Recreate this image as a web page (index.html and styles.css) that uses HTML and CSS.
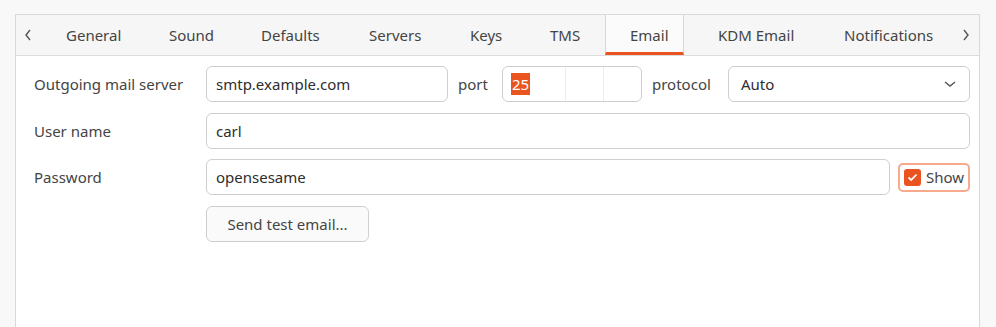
FILE: index.html
```html
<!DOCTYPE html>
<html lang="en">
<head>
  <meta charset="UTF-8" />
  <title>Preferences - Email</title>
  <link rel="stylesheet" href="styles.css">
</head>
<body>
  <div class="notebook">
    <div class="tabbar">
      <span class="arrow left">
        <svg width="10" height="14" viewBox="0 0 10 14"><path d="M7 2 L3 7 L7 12" fill="none" stroke="#555" stroke-width="1.4"/></svg>
      </span>
      <div class="tabs">
        <span class="tab" style="width: 103px">General</span>
        <span class="tab" style="width: 92px">Sound</span>
        <span class="tab" style="width: 108px">Defaults</span>
        <span class="tab" style="width: 101px">Servers</span>
        <span class="tab" style="width: 80px">Keys</span>
        <span class="tab" style="width: 78px">TMS</span>
        <span class="tab active" style="width: 79px">Email</span>
        <span class="tab wide" style="width: 137px">KDM Email</span>
        <span class="tab" style="width: 132px">Notifications</span>
      </div>
      <span class="arrow">
        <svg width="10" height="14" viewBox="0 0 10 14"><path d="M3 2 L7 7 L3 12" fill="none" stroke="#555" stroke-width="1.4"/></svg>
      </span>
    </div>

    <div class="form">
      <label class="label">Outgoing mail server</label>
      <div class="line">
        <div class="entry server">smtp.example.com</div>
        <span class="label port">port</span>
        <div class="spin">
          <span class="spin-value"><span class="selected">25</span></span>
          <span class="spin-btn"></span>
          <span class="spin-btn"></span>
        </div>
        <span class="label protocol">protocol</span>
        <div class="entry combo">
          <span>Auto</span>
          <svg width="14" height="10" viewBox="0 0 14 10"><path d="M2 3 L7 7 L12 3" fill="none" stroke="#555" stroke-width="1.4"/></svg>
        </div>
      </div>

      <label class="label">User name</label>
      <div class="entry">carl</div>

      <label class="label">Password</label>
      <div class="line">
        <div class="entry grow">opensesame</div>
        <div class="check">
          <span class="box">
            <svg width="11" height="9" viewBox="0 0 11 9"><path d="M1.5 4.5 L4.2 7 L9.5 1.5" fill="none" stroke="#fff" stroke-width="1.8"/></svg>
          </span>
          <span>Show</span>
        </div>
      </div>

      <span></span>
      <div><button class="btn">Send test email...</button></div>
    </div>
  </div>
</body>
</html>
```

FILE: styles.css
```css
body {
  margin: 0;
  padding: 14px 0 0 15px;
  background: #f8f8f8;
  font-family: 'Noto Sans', sans-serif;
  font-size: 15px;
  color: #444;
  overflow: hidden;
}

.notebook {
  width: 963px;
  height: 330px;
  background: #fff;
  border: 1px solid #d9d9d9;
}

.tabbar {
  display: flex;
  height: 40px;
  background: #f6f6f6;
  border-bottom: 1px solid #dcdcdc;
}

.arrow {
  width: 26px;
  flex: none;
  display: flex;
  align-items: center;
  justify-content: center;
}

.arrow.left {
  width: 27px;
  padding-right: 4px;
  box-sizing: border-box;
}

.tabs {
  display: flex;
  flex: none;
}

.tab {
  display: flex;
  align-items: center;
  flex: none;
  box-sizing: border-box;
  padding: 0 0 1px 23px;
  white-space: nowrap;
}

.tab.wide {
  padding-left: 34px;
}

.tab.active {
  background: #fbfbfb;
  border-left: 1px solid #f5cdbd;
  border-right: 1px solid #f5cdbd;
  border-bottom: 3px solid #e95420;
  padding: 3px 0 0 24px;
}

.form {
  display: grid;
  grid-template-columns: 172px 1fr;
  row-gap: 10.5px;
  padding: 10px 9px 0 18px;
  align-items: center;
}

.label {
  white-space: nowrap;
}

.label.port {
  width: 34px;
}

.label.protocol {
  width: 66px;
}

.line {
  display: flex;
  align-items: center;
  gap: 10px;
}

.entry {
  height: 36px;
  box-sizing: border-box;
  border: 1px solid #cfcfcf;
  border-radius: 6px;
  padding: 0 9px;
  display: flex;
  align-items: center;
  color: #2e2e2e;
  background: #fff;
}

.entry.server {
  width: 242px;
}

.entry.combo {
  flex: 1;
  justify-content: space-between;
  padding: 0 12px;
}

.entry.grow {
  flex: 1;
}

.spin {
  display: flex;
  width: 140px;
  flex: none;
  height: 36px;
  box-sizing: border-box;
  border: 1px solid #cfcfcf;
  border-radius: 6px;
}

.spin-value {
  flex: 1;
  display: flex;
  align-items: center;
  padding-left: 8px;
}

.selected {
  background: #e95420;
  color: #fff;
  line-height: 22px;
  padding: 0 1px;
}

.spin-btn {
  width: 37px;
  border-left: 1px solid #ececec;
}

.line .check {
  margin-left: -2px;
}

.check {
  display: flex;
  align-items: center;
  gap: 5px;
  width: 72px;
  height: 29px;
  box-sizing: border-box;
  border: 2px solid #f7a98b;
  border-radius: 5px;
  padding-left: 4px;
  overflow: hidden;
  white-space: nowrap;
}

.box {
  width: 17px;
  height: 17px;
  flex: none;
  background: #e95420;
  border-radius: 3px;
  display: flex;
  align-items: center;
  justify-content: center;
}

.btn {
  width: 163px;
  height: 36px;
  border: 1px solid #cfcfcf;
  border-radius: 6px;
  background: #fafafa;
  font-family: inherit;
  font-size: 15px;
  color: #444;
}
```
